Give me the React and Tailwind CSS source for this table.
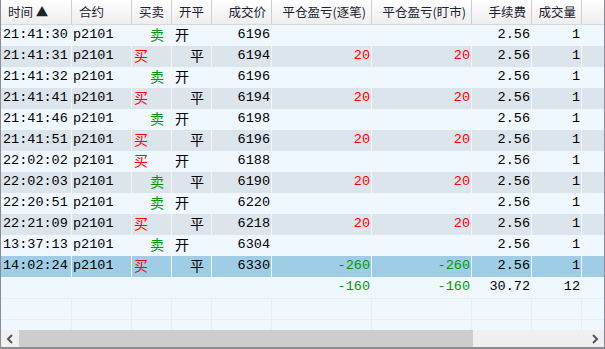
import React from "react";

const cols = "grid-cols-[71px_60px_40px_40px_60px_100px_100px_60px_50px_1fr]";

const rows = [
  { t: "21:41:30", s: "卖", o: "开", p: "6196" },
  { t: "21:41:31", s: "买", o: "平", p: "6194", a: "20", b: "20" },
  { t: "21:41:32", s: "卖", o: "开", p: "6196" },
  { t: "21:41:41", s: "买", o: "平", p: "6194", a: "20", b: "20" },
  { t: "21:41:46", s: "卖", o: "开", p: "6198" },
  { t: "21:41:51", s: "买", o: "平", p: "6196", a: "20", b: "20" },
  { t: "22:02:02", s: "买", o: "开", p: "6188" },
  { t: "22:02:03", s: "卖", o: "平", p: "6190", a: "20", b: "20" },
  { t: "22:20:51", s: "卖", o: "开", p: "6220" },
  { t: "22:21:09", s: "买", o: "平", p: "6218", a: "20", b: "20" },
  { t: "13:37:13", s: "卖", o: "开", p: "6304" },
  { t: "14:02:24", s: "买", o: "平", p: "6330", a: "-260", b: "-260", sel: true },
];

const mono = "font-['Liberation_Mono',monospace] text-[13.5px] items-center overflow-hidden";
const cjk = "font-['Noto_Sans_CJK_SC','Noto_Sans',sans-serif] text-[14px] leading-[18px] items-start";

function Cell({ children, className = "" }) {
  return (
    <div className={`h-[21px] border-r border-[#f4f6f8] flex whitespace-nowrap ${className}`}>
      {children}
    </div>
  );
}

function Row({ r, i }) {
  const bg = r.sel ? "bg-[#9fcde6]" : i % 2 === 0 ? "bg-[#f0f8ff]" : "bg-[#dce4ec]";
  const pnl = (v) => (v && v.startsWith("-") ? "text-[#009900]" : "text-[#ff0000]");
  return (
    <div className={`grid ${cols} ${bg} text-black`}>
      <Cell className={`${mono} pl-[2px]`}>{r.t}</Cell>
      <Cell className={`${mono} pl-[1px]`}>p2101</Cell>
      <Cell className={`${cjk} ${r.s === "卖" ? "pl-[18px] text-[#009900]" : "pl-[2px] text-[#ff0000]"}`}>{r.s}</Cell>
      <Cell className={`${cjk} ${r.o === "开" ? "pl-[3px]" : "pl-[18px]"}`}>{r.o}</Cell>
      <Cell className={`${mono} justify-end pr-[1px]`}>{r.p}</Cell>
      <Cell className={`${mono} justify-end pr-[1px] ${pnl(r.a)}`}>{r.a}</Cell>
      <Cell className={`${mono} justify-end pr-[1px] ${pnl(r.b)}`}>{r.b}</Cell>
      <Cell className={`${mono} justify-end pr-[1px]`}>2.56</Cell>
      <Cell className={`${mono} justify-end pr-[1px]`}>1</Cell>
      <Cell className="border-r-0" />
    </div>
  );
}

export default function App() {
  const heads = [
    { l: "时间 ▲", left: true },
    { l: "合约", left: true },
    { l: "买卖", left: true },
    { l: "开平", left: true },
    { l: "成交价" },
    { l: "平仓盈亏(逐笔)" },
    { l: "平仓盈亏(盯市)" },
    { l: "手续费" },
    { l: "成交量" },
  ];

  return (
    <div className="w-[605px] h-[349px] flex flex-col bg-[#f0f8ff] border-l border-r border-b-2 border-[#8c8c98] overflow-hidden">
      <div className={`grid ${cols} h-[25px] bg-gradient-to-b from-white to-[#eeeeee] border-b border-[#d8d8d8]`}>
        {heads.map((h) => (
          <div
            key={h.l}
            className={`flex items-center border-r border-[#cfcfcf] font-['Noto_Sans_CJK_SC',sans-serif] text-[12.5px] text-[#1a2230] whitespace-nowrap ${h.left ? "pl-[7px]" : "justify-end pr-[5px]"}`}
          >
            {h.l}
          </div>
        ))}
        <div />
      </div>

      <div className="flex-1 overflow-hidden">
        {rows.map((r, i) => (
          <Row key={r.t} r={r} i={i} />
        ))}
        <div className={`grid ${cols} bg-[#f0f8ff] border-b border-[#eaeef2]`}>
          <Cell />
          <Cell />
          <Cell />
          <Cell />
          <Cell />
          <Cell className={`${mono} justify-end pr-[1px] text-[#009900]`}>-160</Cell>
          <Cell className={`${mono} justify-end pr-[1px] text-[#009900]`}>-160</Cell>
          <Cell className={`${mono} justify-end pr-[1px]`}>30.72</Cell>
          <Cell className={`${mono} justify-end pr-[1px]`}>12</Cell>
          <Cell className="border-r-0" />
        </div>
        {[0, 1].map((k) => (
          <div key={k} className={`grid ${cols} bg-[#f0f8ff] border-b border-[#eaeef2]`}>
            {Array.from({ length: 10 }).map((_, j) => (
              <div key={j} className={`h-[20px] ${j < 9 ? "border-r border-[#eaeef2]" : ""}`} />
            ))}
          </div>
        ))}
      </div>

      <div className="h-[17px] flex bg-[#f0f0f0]">
        <div className="w-[18px] flex items-center justify-center">
          <svg width="8" height="10" viewBox="0 0 8 10">
            <polyline points="6,1 2,5 6,9" fill="none" stroke="#555" strokeWidth="2" />
          </svg>
        </div>
        <div className="w-[454px] bg-[#cdcdcd]" />
        <div className="flex-1" />
        <div className="w-[18px] flex items-center justify-center">
          <svg width="8" height="10" viewBox="0 0 8 10">
            <polyline points="2,1 6,5 2,9" fill="none" stroke="#555" strokeWidth="2" />
          </svg>
        </div>
      </div>
    </div>
  );
}
